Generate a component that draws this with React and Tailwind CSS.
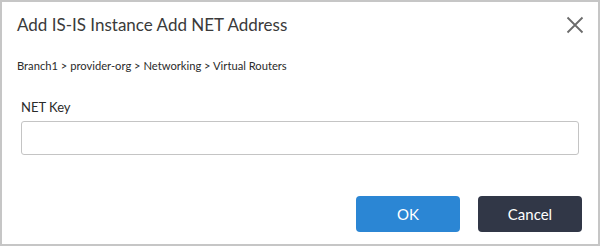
import React from "react";

export default function App() {
  return (
    <div
      className="w-[600px] h-[246px] bg-white border-2 border-[#c6c6c6] flex flex-col text-[#333333]"
      style={{ fontFamily: "Lato, 'Open Sans', sans-serif" }}
    >
      <div className="flex items-start justify-between pl-[15px] pr-[15px] pt-[12px]">
        <h1 className="text-[17px] leading-[22px] text-[#3a3a3a]">Add IS-IS Instance Add NET Address</h1>
        <button className="mt-[2px] mr-[-1px] text-[#6b6b6b]">
          <svg width="18" height="18" viewBox="0 0 18 18" fill="none" stroke="currentColor" strokeWidth="1.8">
            <path d="M1.5 1.5 L16.5 16.5 M16.5 1.5 L1.5 16.5" />
          </svg>
        </button>
      </div>
      <div className="pl-[15px] mt-[22px] text-[11.2px] leading-[16px] text-[#2b2b2b]">
        Branch1 &gt; provider-org &gt; Networking &gt; Virtual Routers
      </div>
      <div className="pl-[19px] pr-[19px] mt-[24px] flex flex-col">
        <label className="text-[13px] leading-[18px] text-[#2b2b2b]">NET Key</label>
        <input className="mt-[5px] h-[34px] w-full border border-[#c4c4c4] rounded-[3px] outline-none" />
      </div>
      <div className="flex justify-end gap-[18px] pr-[16px] mt-[41px]">
        <button className="w-[104px] h-[36px] rounded-[4px] bg-[#2b86d4] text-white text-[15px]">OK</button>
        <button className="w-[104px] h-[36px] rounded-[4px] bg-[#313747] text-white text-[15px]">Cancel</button>
      </div>
    </div>
  );
}
